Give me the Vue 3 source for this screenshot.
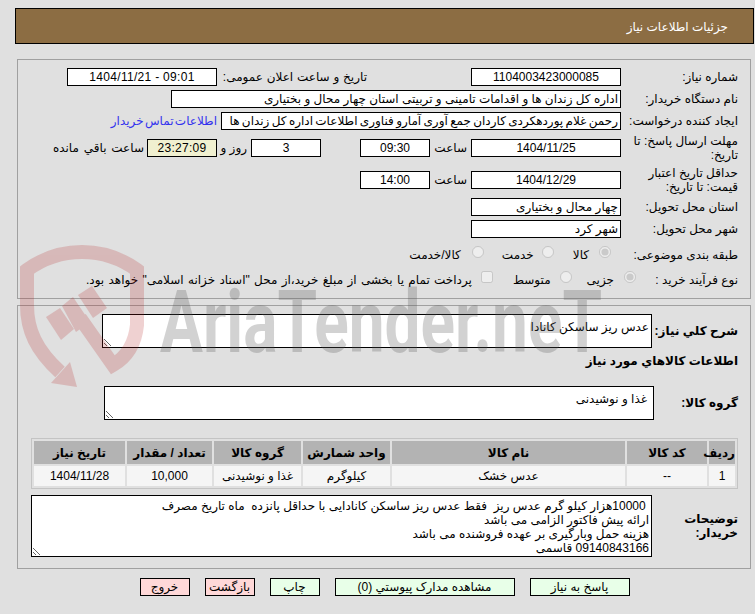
<script setup>
const columns = [
  { title: 'ردیف', width: 26 },
  { title: 'کد کالا', width: 80 },
  { title: 'نام کالا', width: 233 },
  { title: 'واحد شمارش', width: 87 },
  { title: 'گروه کالا', width: 87 },
  { title: 'تعداد / مقدار', width: 85 },
  { title: 'تاریخ نیاز', width: 91 }
]
const cells = ['1', '--', 'عدس خشک', 'کیلوگرم', 'غذا و نوشیدنی', '10,000', '1404/11/28']
const description = ' 10000هزار کیلو گرم عدس ریز  فقط عدس ریز ساسکن کانادایی با حداقل پانزده  ماه تاریخ مصرف\nارائه پیش فاکتور الزامی می باشد\nهزینه حمل وبارگیری بر عهده فروشنده می باشد\n09140843166 قاسمی'
</script>

<template>
  <div class="page" dir="rtl">
    <header class="title-bar">جزئیات اطلاعات نیاز</header>

    <section class="panel form-panel">
      <div class="row">
        <label class="label">شماره نیاز:</label>
        <div class="field w150 center">1104003423000085</div>
        <div class="label label-public">تاریخ و ساعت اعلان عمومی:</div>
        <div class="field w150 center ltr wide-digits">1404/11/21 - 09:01</div>
      </div>
      <div class="row">
        <label class="label">نام دستگاه خریدار:</label>
        <div class="field w450">اداره کل زندان ها و اقدامات تامینی و تربیتی استان چهار محال و بختیاری</div>
      </div>
      <div class="row">
        <label class="label">ایجاد کننده درخواست:</label>
        <div class="field w400 tight">رحمن غلام پوردهکردی کاردان جمع آوری آمارو فناوری اطلاعات اداره کل زندان ها</div>
        <a class="contact">اطلاعات تماس خریدار</a>
      </div>
      <div class="row">
        <label class="label">مهلت ارسال پاسخ: تا تاریخ:</label>
        <div class="field w150 center">1404/11/25</div>
        <span class="unit unit-time">ساعت</span>
        <div class="field w70 center">09:30</div>
        <div class="field w70 center days">3</div>
        <span class="unit unit-days">روز و</span>
        <div class="field w70 center timer wide-digits">23:27:09</div>
        <span class="unit unit-left">ساعت باقي مانده</span>
      </div>
      <div class="row">
        <label class="label">حداقل تاریخ اعتبار قیمت: تا تاریخ:</label>
        <div class="field w150 center">1404/12/29</div>
        <span class="unit unit-time">ساعت</span>
        <div class="field w70 center">14:00</div>
      </div>
      <div class="row">
        <label class="label">استان محل تحویل:</label>
        <div class="field w150">چهار محال و بختیاری</div>
      </div>
      <div class="row">
        <label class="label">شهر محل تحویل:</label>
        <div class="field w150">شهر کرد</div>
      </div>
      <div class="row row-choice">
        <label class="label label-category">طبقه بندی موضوعی:</label>
        <input class="radio" type="radio" name="category" checked disabled>
        <span class="opt opt-goods">کالا</span>
        <input class="radio" type="radio" name="category" disabled>
        <span class="opt opt-service">خدمت</span>
        <input class="radio" type="radio" name="category" disabled>
        <span class="opt opt-both">کالا/خدمت</span>
      </div>
      <div class="row row-process">
        <label class="label label-process">نوع فرآیند خرید :</label>
        <input class="radio" type="radio" name="process" checked disabled>
        <span class="opt opt-small">جزیی</span>
        <input class="radio" type="radio" name="process" disabled>
        <span class="opt opt-medium">متوسط</span>
        <input class="check" type="checkbox" disabled>
        <span class="opt opt-pay">پرداخت تمام یا بخشی از مبلغ خرید،از محل "اسناد خزانه اسلامی" خواهد بود.</span>
      </div>
    </section>

    <section class="panel detail-panel">
      <div class="detail-row">
        <label class="label bold label-summary">شرح کلي نیاز:</label>
        <textarea class="area area-summary" readonly>عدس ریز ساسکن کانادا</textarea>
      </div>
      <h2 class="section-title">اطلاعات کالاهاي مورد نیاز</h2>
      <div class="detail-row group-row">
        <label class="label bold label-group">گروه کالا:</label>
        <textarea class="area area-group" readonly>غذا و نوشیدنی</textarea>
      </div>
      <table class="items">
        <colgroup>
          <col v-for="c in columns" :key="c.title" :style="{ width: c.width + 'px' }">
        </colgroup>
        <thead>
          <tr><th v-for="c in columns" :key="c.title">{{ c.title }}</th></tr>
        </thead>
        <tbody>
          <tr><td v-for="(v, i) in cells" :key="i">{{ v }}</td></tr>
        </tbody>
      </table>
      <div class="detail-row notes-row">
        <label class="label bold label-notes">توضیحات خریدار:</label>
        <textarea class="area area-notes" readonly :value="description"></textarea>
      </div>
    </section>

    <nav class="actions">
      <button class="btn ok w100">پاسخ به نیاز</button>
      <button class="btn ok w180">مشاهده مدارک پیوستي (0)</button>
      <button class="btn ok w50">چاپ</button>
      <button class="btn no w50">بازگشت</button>
      <button class="btn no w50">خروج</button>
    </nav>

    <svg class="watermark" width="755" height="614" viewBox="0 0 755 614" aria-hidden="true">
      <g class="wm-red">
        <path class="wm-band" d="M60 372C36 350 27 330 27 305L27 270C60 246 104 246 137 270L137 325C135 345 125 358 113 365L80 318" />
        <polygon points="51,383 70,362 77,387" />
        <polygon points="46,317 60,308 74,329 61,340" />
        <polygon points="62,306 73,297 90,322 76,332" />
        <polygon points="78,295 92,286 107,308 93,318" />
      </g>
      <text class="wm-text" x="160" y="352" textLength="442" lengthAdjust="spacingAndGlyphs" direction="ltr">AriaTender.neT</text>
    </svg>
  </div>
</template>

<style>
html, body { margin: 0; background: #e0e0e0; }
</style>

<style scoped>
.page {
  position: relative;
  box-sizing: border-box;
  width: 755px;
  height: 614px;
  padding: 8px 1px 0 15px;
  overflow: hidden;
  font: 12px/14px "Liberation Sans", "DejaVu Sans", sans-serif;
  color: #000;
  background: #e0e0e0;
}
.title-bar {
  box-sizing: border-box;
  height: 36px;
  padding-right: 25px;
  border: 1px solid #000;
  background: #8c6d43;
  color: #fff;
  line-height: 36px;
}
.panel {
  box-sizing: border-box;
  width: 734px;
  margin-right: 3px;
  border: 1px solid #a0a0a0;
}
.form-panel {
  display: flex;
  flex-direction: column;
  gap: 4px;
  height: 240px;
  margin-top: 15px;
  padding: 8px 12px 0 0;
}
.row { display: flex; align-items: center; min-height: 18px; }
.label { flex: none; box-sizing: border-box; width: 117px; padding-left: 7px; }
.field {
  flex: none;
  box-sizing: border-box;
  height: 18px;
  padding: 0 2px;
  border: 1px solid #000;
  background: #fff;
  line-height: 16px;
  white-space: nowrap;
  overflow: hidden;
}
.center { text-align: center; }
.ltr { direction: ltr; }
.wide-digits { letter-spacing: 0.3px; }
.tight { word-spacing: -1px; }
.w150 { width: 150px; }
.w70 { width: 70px; }
.w450 { width: 450px; }
.w400 { width: 400px; }
.label-public { width: 150px; margin-right: 104px; padding-left: 0; word-spacing: 0.5px; }
.contact { margin-right: 4px; color: #3333ee; word-spacing: -2px; }
.unit { flex: none; }
.unit-time { width: 37px; margin-right: 4px; }
.days { margin-right: 39px; }
.unit-days { width: 30px; margin-right: 4px; }
.timer { background: #f0f0d0; }
.unit-left { margin-right: 3px; word-spacing: 1.5px; }
.row-choice { height: 22px; }
.row-process { height: 20px; }
.radio, .check { flex: none; margin: 0 0 3px; width: 12px; height: 12px; }
.label-category { width: 127px; padding: 3px 0 0; }
.label-process { width: 102px; padding: 3px 0 0; }
.opt { flex: none; padding-top: 3px; }
.opt-goods { margin: 0 10px 0 19px; }
.opt-service { margin: 0 8px 0 18px; }
.opt-both { margin-right: 11px; }
.opt-small { margin: 0 10px 0 15px; }
.opt-medium { margin: 0 9px 0 20px; }
.opt-pay { margin-right: 9px; word-spacing: 1px; }
.detail-panel {
  height: 264px;
  margin-top: 6px;
  padding: 8px 12px 0 0;
}
.detail-row { display: flex; align-items: center; }
.bold, .section-title, th { font-weight: bold; }
.label-summary { width: 86px; padding-left: 0; }
.label-group { width: 84px; padding-left: 0; }
.label-notes { width: 86px; padding-left: 16px; }
.area {
  flex: none;
  box-sizing: border-box;
  display: block;
  margin: 0;
  padding: 5px 2px 0;
  border: 1px solid #000;
  border-radius: 0;
  outline: none;
  background: #fff;
  color: #000;
  font: inherit;
  resize: both;
  overflow: hidden;
}
.area-summary { width: 550px; height: 34px; }
.area-group { width: 550px; height: 34px; padding: 5px 6px 0; }
.area-notes { width: 621px; height: 62px; padding: 3px 2px 0; white-space: pre; }
.section-title { margin: 6px 0 0; font-size: 12px; line-height: 14px; }
.group-row { margin-top: 18px; }
.items {
  width: 707px;
  margin: 18px 0 0 0;
  table-layout: fixed;
  border: 1px solid #c4c4c4;
  border-spacing: 2px;
  text-align: center;
}
.items th { height: 23px; padding: 0; background: #b3b3b3; }
.items td { height: 20px; padding: 0; background: #f5f5f5; }
.notes-row { margin-top: 6px; }
.actions { display: flex; justify-content: center; gap: 15px; margin-top: 9px; }
.btn {
  box-sizing: border-box;
  height: 18px;
  padding: 0;
  border: 1px solid #000;
  border-radius: 0;
  color: #000;
  font: inherit;
}
.ok { background: #e8ffe8; }
.no { background: #ffd8d8; }
.w100 { width: 100px; }
.w180 { width: 180px; }
.w50 { width: 50px; }
.watermark { position: absolute; top: 0; left: 0; pointer-events: none; }
.wm-red { opacity: 0.2; fill: #b41e1e; }
.wm-band { fill: none; stroke: #b41e1e; stroke-width: 14; }
.wm-text {
  font: 700 87px Roboto, sans-serif;
  fill: rgba(90, 90, 90, 0.27);
}
</style>
